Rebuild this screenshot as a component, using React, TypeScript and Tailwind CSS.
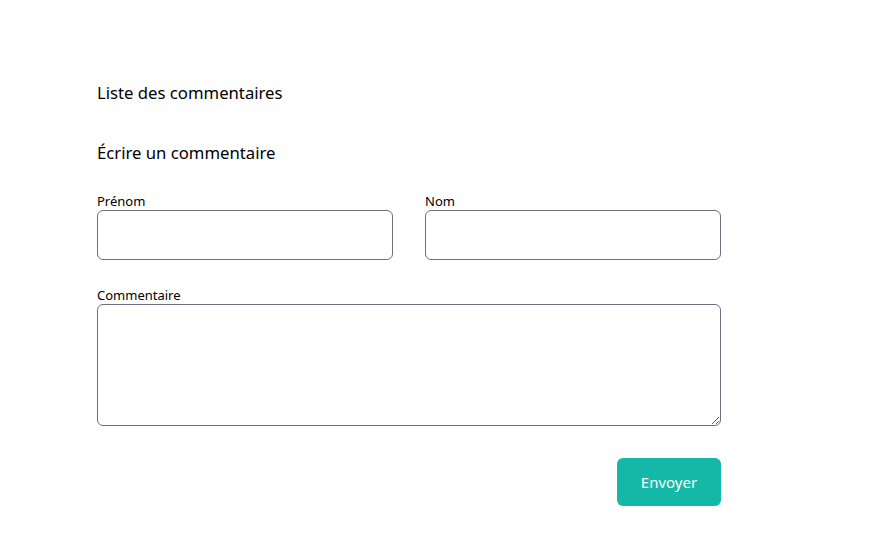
import React from 'react';

const font = { fontFamily: '"Noto Sans", "Open Sans", sans-serif' };

export default function App() {
  return (
    <div className="min-h-screen bg-white text-black" style={font}>
      <div className="ml-[97px] w-[624px] pt-[79px]">
        <h2 className="text-[16.7px] leading-7">Liste des commentaires</h2>

        <h2 className="mt-8 text-[16.7px] leading-7">Écrire un commentaire</h2>

        <form className="mt-[25px]">
          <div className="grid grid-cols-2 gap-8">
            <div>
              <label className="block text-[13px] leading-[18px]">Prénom</label>
              <input className="block h-[50px] w-full rounded-md border border-gray-500 px-3" />
            </div>
            <div>
              <label className="block text-[13px] leading-[18px]">Nom</label>
              <input className="block h-[50px] w-full rounded-md border border-gray-500 px-3" />
            </div>
          </div>

          <div className="mt-[26px]">
            <label className="block text-[13px] leading-[18px]">Commentaire</label>
            <textarea className="block h-[122px] w-full rounded-md border border-gray-500 px-3 py-2" />
          </div>

          <div className="mt-8 flex justify-end">
            <button type="button" className="h-12 w-[104px] rounded-md bg-[#14b8a6] text-[15px] text-white">
              Envoyer
            </button>
          </div>
        </form>
      </div>
    </div>
  );
}
